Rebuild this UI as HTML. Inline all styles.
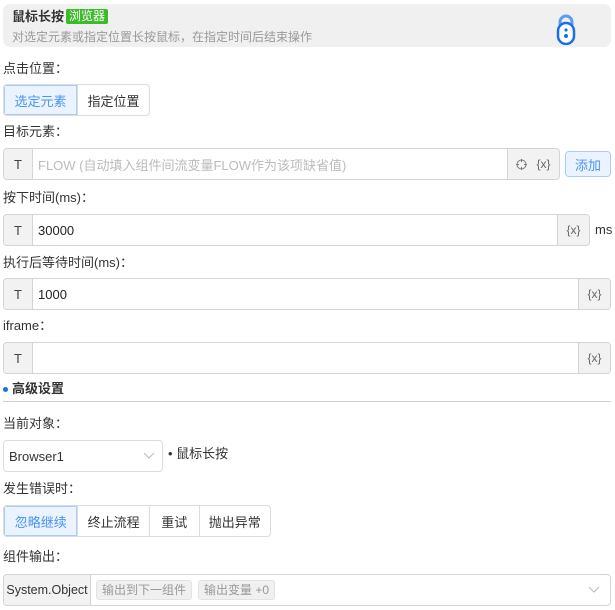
<!DOCTYPE html>
<html><head><meta charset="utf-8"><style>
*{box-sizing:border-box;margin:0;padding:0}
body{width:615px;height:610px;background:#fff;font-family:"Liberation Sans","Noto Sans CJK SC",sans-serif;font-size:13px;color:#333;position:relative;overflow:hidden}
.a{position:absolute}
.lbl{position:absolute;left:3px;font-size:13px;color:#333;line-height:16px}
.inp{position:absolute;left:3px;height:32px;border:1px solid #d4d4d4;border-radius:4px;background:#fff;display:flex;overflow:hidden}
.t{width:29px;background:#f2f2f2;border-right:1px solid #d4d4d4;display:flex;align-items:center;justify-content:center;font-size:13px;color:#444}
.f{flex:1;display:flex;align-items:center;padding-left:5px;font-size:13px;color:#222}
.x{background:#f2f2f2;border-left:1px solid #d4d4d4;display:flex;align-items:center;justify-content:center;font-size:12px;color:#666;width:32px}
.seg{position:absolute;display:flex;height:32px;border:1px solid #dcdcdc;border-radius:4px;overflow:hidden}
.seg div{display:flex;align-items:center;justify-content:center;border-left:1px solid #dcdcdc;font-size:13px;color:#333}
.seg div:first-child{border-left:none;background:#eaf3ff;color:#4b94f0;box-shadow:inset 0 0 0 1px #a9cdf8}
</style></head><body>
<div class="a" style="left:3px;top:4px;width:608px;height:43px;background:#f0f0f0;border-radius:7px"></div>
<div class="a" style="left:12px;top:9px;font-size:13px;font-weight:bold;color:#333;line-height:16px">鼠标长按</div>
<div class="a" style="left:66px;top:9px;height:15px;padding:0 3px;background:#3cba2a;color:#fff;font-size:12px;line-height:15px;border-radius:2px">浏览器</div>
<div class="a" style="left:12px;top:29px;font-size:12px;color:#999;line-height:16px">对选定元素或指定位置长按鼠标，在指定时间后结束操作</div>
<svg class="a" style="left:555px;top:13px" width="22" height="32" viewBox="0 0 22 32"><path d="M5 12 V9 A6 6 0 0 1 17 9 V12" fill="none" stroke="#5b9cf5" stroke-width="3"/><rect x="3" y="10" width="16" height="21" rx="8" fill="#fff" stroke="#1a6fe8" stroke-width="2.5"/><circle cx="11" cy="17" r="1.6" fill="#1a6fe8"/><circle cx="11" cy="23" r="2" fill="#1a6fe8"/></svg>

<div class="lbl" style="top:61px">点击位置：</div>
<div class="seg" style="left:3px;top:84px;width:147px"><div style="width:74px">选定元素</div><div style="width:73px">指定位置</div></div>

<div class="lbl" style="top:124px">目标元素：</div>
<div class="inp" style="top:148px;width:557px"><div class="t">T</div><div class="f" style="color:#bbb">FLOW (自动填入组件间流变量FLOW作为该项缺省值)</div><div class="x" style="width:52px;justify-content:space-around;padding:0 4px"><svg width="11" height="11" viewBox="0 0 11 11"><circle cx="5.5" cy="5.5" r="4.5" fill="none" stroke="#777"/><path d="M5.5 0V3M5.5 8V11M0 5.5H3M8 5.5H11" stroke="#777"/></svg><span>{x}</span></div></div>
<div class="a" style="left:565px;top:151px;width:46px;height:26px;border:1px solid #a9cdf8;background:#eaf3ff;border-radius:4px;color:#4b94f0;font-size:13px;display:flex;align-items:center;justify-content:center">添加</div>

<div class="lbl" style="top:190px">按下时间(ms)：</div>
<div class="inp" style="top:214px;width:587px"><div class="t">T</div><div class="f">30000</div><div class="x">{x}</div></div>
<div class="a" style="left:595px;top:222px;font-size:13px;line-height:16px">ms</div>

<div class="lbl" style="top:255px">执行后等待时间(ms)：</div>
<div class="inp" style="top:278px;width:608px"><div class="t">T</div><div class="f">1000</div><div class="x">{x}</div></div>

<div class="lbl" style="top:318px">iframe：</div>
<div class="inp" style="top:342px;width:608px"><div class="t">T</div><div class="f"></div><div class="x">{x}</div></div>

<div class="a" style="left:3px;top:387px;width:5px;height:5px;border-radius:50%;background:#1a6fe8"></div>
<div class="a" style="left:12px;top:381px;font-weight:bold;font-size:13px;line-height:16px">高级设置</div>
<div class="a" style="left:3px;top:401px;width:608px;height:1px;background:#d0d0d0"></div>

<div class="lbl" style="top:416px">当前对象：</div>
<div class="a" style="left:3px;top:440px;width:160px;height:32px;border:1px solid #dcdcdc;border-radius:4px;display:flex;align-items:center;padding-left:5px">Browser1</div>
<svg class="a" style="left:143px;top:452px" width="12" height="8"><path d="M1 1 L6 6 L11 1" fill="none" stroke="#bbb"/></svg>
<div class="a" style="left:168px;top:446px;line-height:16px">• 鼠标长按</div>

<div class="lbl" style="top:481px">发生错误时：</div>
<div class="seg" style="left:3px;top:505px;width:268px"><div style="width:74px">忽略继续</div><div style="width:72px">终止流程</div><div style="width:50px">重试</div><div style="width:72px">抛出异常</div></div>

<div class="lbl" style="top:549px">组件输出：</div>
<div class="a" style="left:3px;top:574px;width:608px;height:32px;border:1px solid #d4d4d4;border-radius:4px;display:flex;align-items:center;overflow:hidden">
<div style="width:87px;height:100%;background:#f2f2f2;border-right:1px solid #d4d4d4;display:flex;align-items:center;justify-content:center;font-size:12.5px">System.Object</div>
<div style="margin-left:5px;height:20px;padding:0 5px;background:#f0f0f0;border:1px solid #e3e3e3;border-radius:3px;color:#999;font-size:12px;line-height:18px">输出到下一组件</div>
<div style="margin-left:6px;height:20px;padding:0 5px;background:#f0f0f0;border:1px solid #e3e3e3;border-radius:3px;color:#999;font-size:12px;line-height:18px">输出变量 +0</div>
</div>
<svg class="a" style="left:588px;top:586px" width="12" height="8"><path d="M1 1 L6 6 L11 1" fill="none" stroke="#bbb"/></svg>
</body></html>
